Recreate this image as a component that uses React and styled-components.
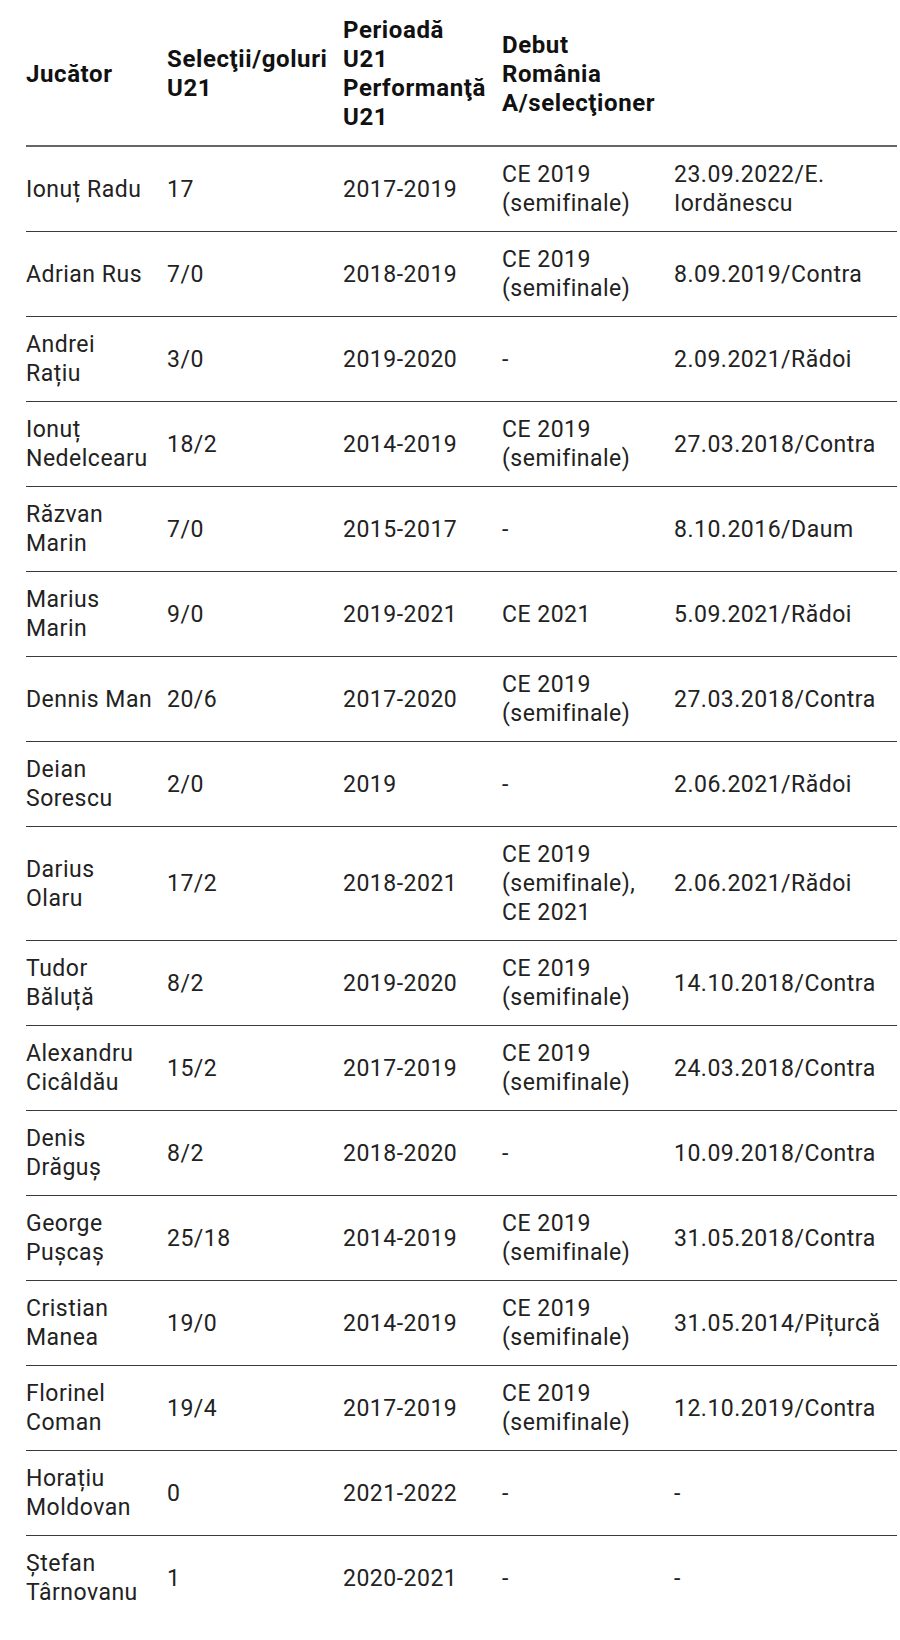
import React from 'react';
import styled, { createGlobalStyle } from 'styled-components';

const GlobalStyle = createGlobalStyle`
body {
  margin: 0;
  background: #fff;
  font-family: Roboto, "Liberation Sans", Arial, sans-serif;
}
`

const Wrap = styled.div`
padding: 3px 3px 0 26px;
`

const Table = styled.table`
width: 871px;
border-collapse: collapse;
table-layout: fixed;
font-size: 23px;
line-height: 29px;
letter-spacing: 0.5px;
color: #222;
`

const Th = styled.th`
text-align: left;
vertical-align: middle;
font-size: 24px;
font-weight: 700;
letter-spacing: 0.6px;
color: #111;
padding: 13px 4px 13px 0;
border-bottom: 2px solid #666;
white-space: pre-line;
`

const Row = styled.tr`
border-bottom: ${props => (props.last ? 'none' : '1px solid #3a3a3a')};
`

const Td = styled.td`
vertical-align: middle;
padding: 13px 4px 13px 0;
white-space: pre-line;
`

const widths = [141, 176, 159, 172, 223];

const headers = [
  'Jucător',
  'Selecţii/goluri\nU21',
  'Perioadă\nU21\nPerformanţă\nU21',
  'Debut\nRomânia\nA/selecţioner',
  '',
];

const SEMI = 'CE 2019\n(semifinale)';

const players = [
  ['Ionuț Radu', '17', '2017-2019', SEMI, '23.09.2022/E.\nIordănescu'],
  ['Adrian Rus', '7/0', '2018-2019', SEMI, '8.09.2019/Contra'],
  ['Andrei\nRațiu', '3/0', '2019-2020', '-', '2.09.2021/Rădoi'],
  ['Ionuț\nNedelcearu', '18/2', '2014-2019', SEMI, '27.03.2018/Contra'],
  ['Răzvan\nMarin', '7/0', '2015-2017', '-', '8.10.2016/Daum'],
  ['Marius\nMarin', '9/0', '2019-2021', 'CE 2021', '5.09.2021/Rădoi'],
  ['Dennis Man', '20/6', '2017-2020', SEMI, '27.03.2018/Contra'],
  ['Deian\nSorescu', '2/0', '2019', '-', '2.06.2021/Rădoi'],
  ['Darius\nOlaru', '17/2', '2018-2021', 'CE 2019\n(semifinale),\nCE 2021', '2.06.2021/Rădoi'],
  ['Tudor\nBăluță', '8/2', '2019-2020', SEMI, '14.10.2018/Contra'],
  ['Alexandru\nCicâldău', '15/2', '2017-2019', SEMI, '24.03.2018/Contra'],
  ['Denis\nDrăguș', '8/2', '2018-2020', '-', '10.09.2018/Contra'],
  ['George\nPușcaș', '25/18', '2014-2019', SEMI, '31.05.2018/Contra'],
  ['Cristian\nManea', '19/0', '2014-2019', SEMI, '31.05.2014/Pițurcă'],
  ['Florinel\nComan', '19/4', '2017-2019', SEMI, '12.10.2019/Contra'],
  ['Horațiu\nMoldovan', '0', '2021-2022', '-', '-'],
  ['Ștefan\nTârnovanu', '1', '2020-2021', '-', '-'],
];

export default function App() {
  return (
    <Wrap>
      <GlobalStyle />
      <Table>
        <colgroup>
          {widths.map((w, i) => <col key={i} style={{ width: w }} />)}
        </colgroup>
        <thead>
          <tr>
            {headers.map((h, i) => <Th key={i}>{h}</Th>)}
          </tr>
        </thead>
        <tbody>
          {players.map((p, i) => (
            <Row key={i} last={i === players.length - 1}>
              {p.map((cell, j) => <Td key={j}>{cell}</Td>)}
            </Row>
          ))}
        </tbody>
      </Table>
    </Wrap>
  );
}
